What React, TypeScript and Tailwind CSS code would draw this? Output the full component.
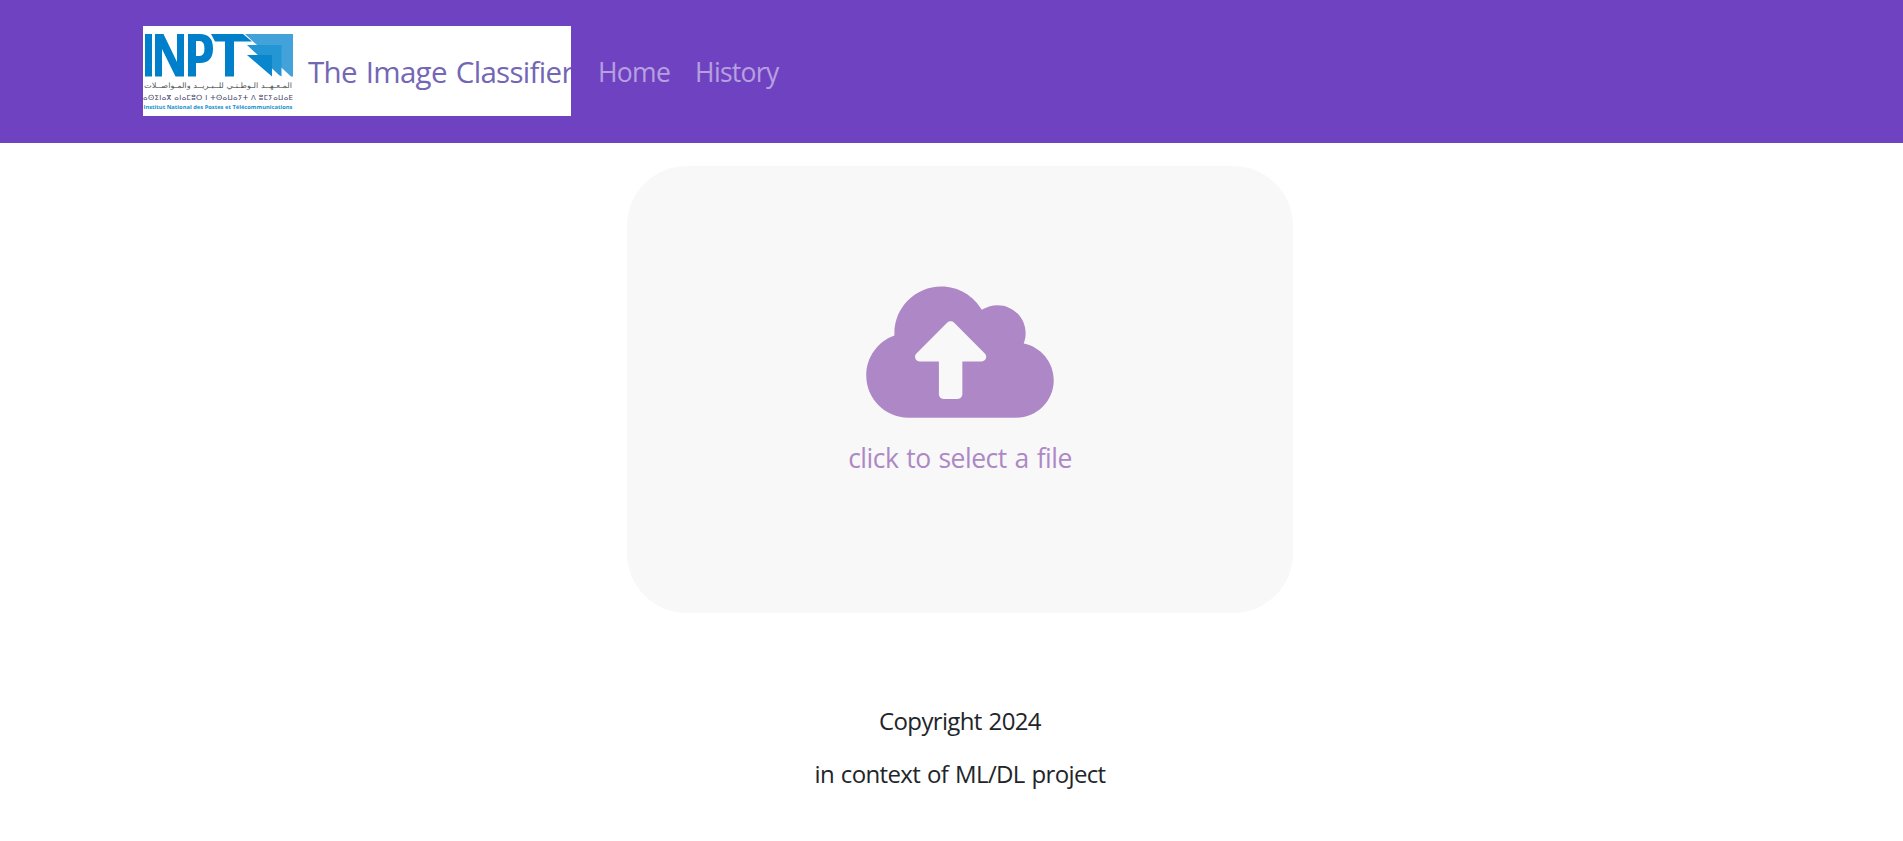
import React from "react";
import { FaCloudUploadAlt } from "react-icons/fa";

function Logo() {
  return (
    <svg className="h-[75px] w-[150px] shrink-0" viewBox="0 0 150 75" aria-label="INPT">
      <g fill="#0080cb">
        <rect x="2" y="0" width="7" height="42.5" />
        <path d="M12 0H20.5L34 28V0H41V42.5H32.5L19 15V42.5H12Z" />
        <path fillRule="evenodd" d="M45 0H57Q70 0 70 14.5Q70 29 57 29H53V42.5H45ZM53 7V22H56.5Q61.5 22 61.5 14.5Q61.5 7 56.5 7Z" />
        <path d="M68 0H100L109 7.5H91V42.5H82V7.5H72Z" />
      </g>
      <path d="M102 0H150V42.5H148Z" fill="#42a2d9" />
      <path d="M104 11H138.5V42.5L136 41Z" fill="#2496d3" />
      <path d="M104 21H129V42.5Z" fill="#0a86cc" />
      <text x="149" y="53.5" fontSize="7.5" textLength="148" lengthAdjust="spacingAndGlyphs" direction="rtl" fill="#55575b" fontFamily="'DejaVu Sans', sans-serif">المـعـهــد الـوطـنـي للــبـريــد والمـواصــلات</text>
      <text x="0" y="65.5" fontSize="7" textLength="150" fill="#3e4066" fontFamily="'DejaVu Sans', sans-serif">ⴰⵙⵉⵏⴰⴳ ⴰⵏⴰⵎⵓⵔ ⵏ ⵜⵙⴰⵡⴰⵢⵜ ⴷ ⵓⵎⵢⴰⵡⴰⴹ</text>
      <text x="0.5" y="74.5" fontSize="5.5" fontWeight="bold" textLength="149" lengthAdjust="spacingAndGlyphs" fill="#1590d0" fontFamily="'Open Sans', sans-serif">Institut National des Postes et Télécommunications</text>
    </svg>
  );
}

export default function App() {
  return (
    <div className="min-h-[841px] bg-white font-['Open_Sans',sans-serif]">
      <header className="flex h-[143px] items-start bg-[#6f42c1] pl-[143px] pt-[26px]">
        <a className="flex h-[90px] w-[428px] items-start overflow-hidden whitespace-nowrap bg-white pt-2">
          <Logo />
          <span className="ml-[15px] mt-[15px] text-[29.5px] leading-[45px] tracking-[-0.7px] text-[#7367b5] [word-spacing:2px]">The Image Classifier</span>
        </a>
        <nav className="ml-[27px] mt-[26px] flex gap-[25px] text-[26.5px] leading-[40px] tracking-[-0.7px] text-white/50">
          <a>Home</a>
          <a>History</a>
        </nav>
      </header>
      <main className="pl-[627px] pt-[23px]">
        <button className="flex h-[447px] w-[666px] flex-col items-center rounded-[60px] bg-[#f8f8f8] pt-[111px] text-[#ae88c6]">
          <FaCloudUploadAlt className="h-[150px] w-[188px]" />
          <span className="mt-[11px] text-[26.5px] leading-[40px] tracking-[-0.5px] [word-spacing:1.5px]">click to select a file</span>
        </button>
      </main>
      <footer className="ml-[627px] mt-[90px] flex w-[666px] flex-col items-center gap-[17px] text-2xl leading-9 tracking-[-0.65px] text-[#212529] [word-spacing:1.3px]">
        <p className="leading-9">Copyright 2024</p>
        <p className="leading-9">in context of ML/DL project</p>
      </footer>
    </div>
  );
}
